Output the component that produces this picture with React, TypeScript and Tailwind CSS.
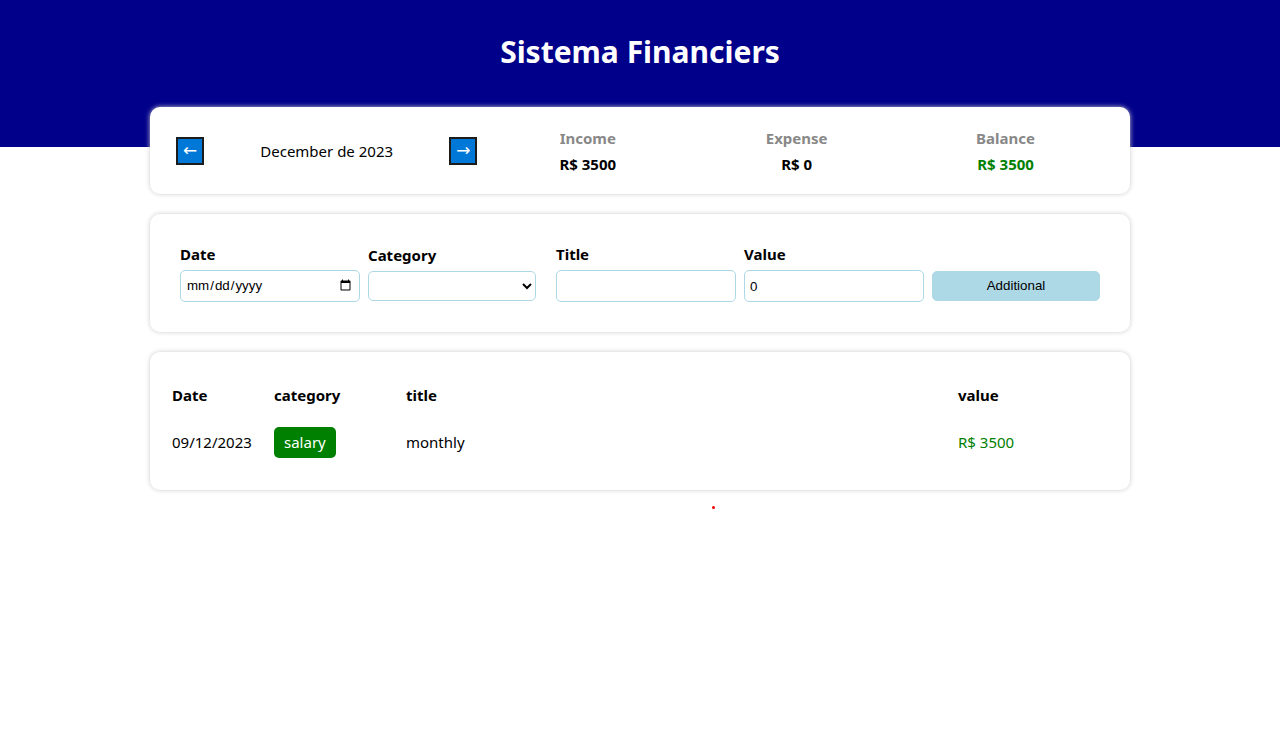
import { useState } from "react";

type Item = {
  date: string;
  category: string;
  title: string;
  value: number;
};

const items: Item[] = [
  { date: "09/12/2023", category: "salary", title: "monthly", value: 3500 },
];

const font = "font-['Noto_Sans','Open_Sans',sans-serif]";

function ResumeItem({ title, value, color }: { title: string; value: number; color: string }) {
  return (
    <div className="flex-1 text-center font-bold">
      <div className="mb-[5px] pt-px leading-[21px] text-[#888]">{title}</div>
      <div className={`leading-[20px] ${color}`}>R$ {value}</div>
    </div>
  );
}

function ArrowButton({ label }: { label: string }) {
  return (
    <div className="flex w-10 justify-center">
      <button className="flex h-7 w-7 items-center justify-center border-2 border-[#1c1c1c] bg-[#0078d7] pb-px font-['DejaVu_Sans',sans-serif] text-[17px] leading-none text-white">
        {label}
      </button>
    </div>
  );
}

export default function App() {
  const [value, setValue] = useState("0");

  return (
    <div className={`min-h-screen bg-white text-[15px] text-black ${font}`}>
      <header className="h-[147px] bg-[#00008b] pt-[30px] text-center">
        <h1 className="text-[30px] font-bold leading-[43px] text-white">
          Sistema Financiers
        </h1>
      </header>

      <main className="mx-auto max-w-[980px]">
        <section className="-mt-10 flex items-center rounded-[10px] bg-white p-5 shadow-[0_0_5px_#ccc]">
          <div className="flex flex-1 items-center">
            <ArrowButton label="←" />
            <div className="flex-1 pt-px text-center leading-[21px]">December de 2023</div>
            <ArrowButton label="→" />
          </div>
          <div className="flex flex-[2] items-center">
            <ResumeItem title="Income" value={3500} color="text-black" />
            <ResumeItem title="Expense" value={0} color="text-black" />
            <ResumeItem title="Balance" value={3500} color="text-[#008000]" />
          </div>
        </section>

        <section className="mt-5 flex rounded-[10px] bg-white p-5 shadow-[0_0_5px_#ccc]">
          <label className="m-[10px] min-w-0 flex-1">
            <div className="mb-[5px] font-bold leading-[21px]">Date</div>
            <input
              type="date"
              className="block h-8 w-[180px] rounded-[5px] border border-[#add8e6] px-[5px] font-['Liberation_Sans',sans-serif] text-[13.33px] outline-none"
            />
          </label>
          <label className="m-[10px] min-w-0 flex-1">
            <div className="mb-[5px] mt-px font-bold leading-[21px]">Category</div>
            <select className="block h-[30px] w-full appearance-auto rounded-[5px] border border-[#add8e6] bg-white px-[2px] text-[13px] outline-none">
              <option value=""></option>
              <option value="food">food</option>
              <option value="rent">rent</option>
              <option value="salary">salary</option>
            </select>
          </label>
          <label className="m-[10px] min-w-0 flex-1">
            <div className="mb-[5px] font-bold leading-[21px]">Title</div>
            <input
              type="text"
              className="block h-8 w-[180px] rounded-[5px] border border-[#add8e6] px-[5px] text-[13px] outline-none"
            />
          </label>
          <label className="m-[10px] min-w-0 flex-1">
            <div className="mb-[5px] font-bold leading-[21px]">Value</div>
            <input
              type="number"
              value={value}
              onChange={(e) => setValue(e.target.value)}
              className="block h-8 w-[180px] rounded-[5px] border border-[#add8e6] px-[5px] font-['Liberation_Sans',sans-serif] text-[13.33px] outline-none"
            />
          </label>
          <div className="m-[10px] flex min-w-0 flex-1 flex-col">
            <div className="mb-[5px] h-[21px]" />
            <button className="mt-px h-[30px] w-full rounded-[5px] border border-[#add8e6] bg-[#add8e6] px-[5px] font-['Liberation_Sans',sans-serif] text-[13.33px] text-black">
              Additional
            </button>
          </div>
        </section>

        <section className="mt-5 rounded-[10px] bg-white p-5 shadow-[0_0_5px_#ccc]">
          <table className="w-full border-separate border-spacing-[2px]">
            <thead>
              <tr>
                <th className="w-[100px] pb-[9px] pt-[11px] text-left font-bold leading-[21px]">Date</th>
                <th className="w-[130px] pb-[9px] pt-[11px] text-left font-bold leading-[21px]">category</th>
                <th className="pb-[9px] pt-[11px] text-left font-bold leading-[21px]">title</th>
                <th className="w-[150px] pb-[9px] pt-[11px] text-left font-bold leading-[21px]">value</th>
              </tr>
            </thead>
            <tbody>
              {items.map((item, index) => (
                <tr key={index}>
                  <td className="py-[10px] leading-[21px]">{item.date}</td>
                  <td className="py-[10px] leading-[21px]">
                    <span className="inline-block rounded-[5px] bg-[#008000] px-[10px] py-[5px] text-white">
                      {item.category}
                    </span>
                  </td>
                  <td className="py-[10px] leading-[21px]">{item.title}</td>
                  <td className="py-[10px] leading-[21px] text-[#008000]">R$ {item.value}</td>
                </tr>
              ))}
            </tbody>
          </table>
        </section>

        <div className="flex justify-center pt-4">
          <span className="ml-[147px] h-[3px] w-[3px] rounded-full bg-[#e00]" />
        </div>
      </main>
    </div>
  );
}
